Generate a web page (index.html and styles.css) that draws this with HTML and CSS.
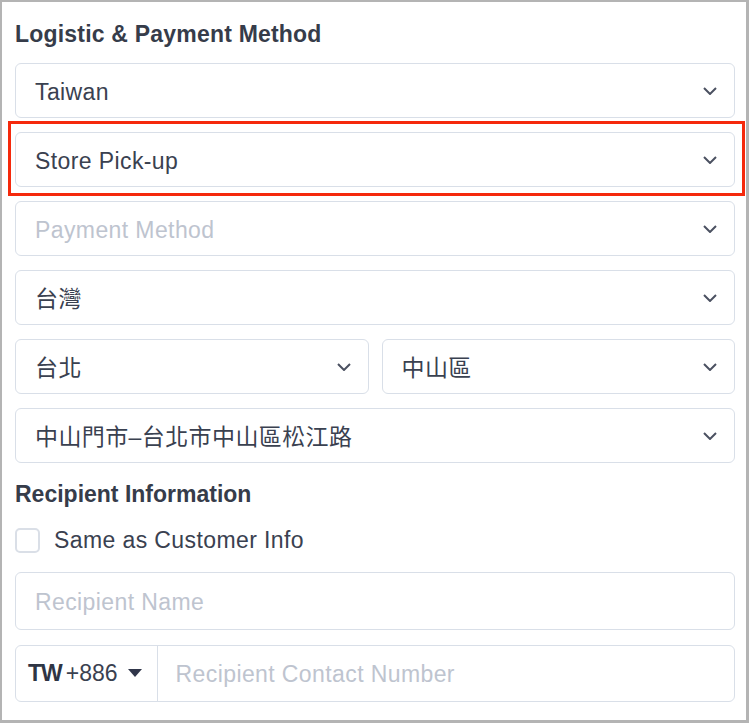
FILE: index.html
```html
<!DOCTYPE html>
<html lang="zh-Hant">
<head>
    <meta charset="UTF-8">
    <title>Logistic &amp; Payment Method</title>
    <meta name="viewport" content="width=device-width, initial-scale=1.0">
    <link rel="stylesheet" href="styles.css">
</head>
<body>
    <div class="frame">
        <h3 class="section-title">Logistic &amp; Payment Method</h3>

        <div class="field select">
            <span class="value">Taiwan</span>
            <svg class="chevron" width="14" height="8" viewBox="0 0 14 8"><path d="M1 1 L7 7 L13 1"/></svg>
        </div>

        <div class="highlight">
            <div class="field select">
                <span class="value">Store Pick-up</span>
                <svg class="chevron" width="14" height="8" viewBox="0 0 14 8"><path d="M1 1 L7 7 L13 1"/></svg>
            </div>
        </div>

        <div class="field select">
            <span class="value placeholder">Payment Method</span>
            <svg class="chevron" width="14" height="8" viewBox="0 0 14 8"><path d="M1 1 L7 7 L13 1"/></svg>
        </div>

        <div class="field select">
            <span class="value">台灣</span>
            <svg class="chevron" width="14" height="8" viewBox="0 0 14 8"><path d="M1 1 L7 7 L13 1"/></svg>
        </div>

        <div class="row">
            <div class="field select">
                <span class="value">台北</span>
                <svg class="chevron" width="14" height="8" viewBox="0 0 14 8"><path d="M1 1 L7 7 L13 1"/></svg>
            </div>
            <div class="field select">
                <span class="value">中山區</span>
                <svg class="chevron" width="14" height="8" viewBox="0 0 14 8"><path d="M1 1 L7 7 L13 1"/></svg>
            </div>
        </div>

        <div class="field select">
            <span class="value">中山門市–台北市中山區松江路</span>
            <svg class="chevron" width="14" height="8" viewBox="0 0 14 8"><path d="M1 1 L7 7 L13 1"/></svg>
        </div>

        <h3 class="section-title recipient">Recipient Information</h3>

        <label class="check-row">
            <span class="checkbox"></span>
            <span>Same as Customer Info</span>
        </label>

        <div class="field input">
            <span class="value placeholder">Recipient Name</span>
        </div>

        <div class="field input phone">
            <div class="prefix">
                <b>TW</b><span class="code">+886</span>
                <svg class="caret" width="14" height="8" viewBox="0 0 14 8"><path d="M0 0 H14 L7 8 Z"/></svg>
            </div>
            <span class="value placeholder">Recipient Contact Number</span>
        </div>
    </div>
</body>
</html>
```

FILE: styles.css
```css
html, body {
    margin: 0;
    padding: 0;
    background: #fff;
}
body {
    font-family: 'Liberation Sans', Arial, 'Noto Sans CJK TC', sans-serif;
    font-size: 23px;
    letter-spacing: 0.4px;
    color: #3a4150;
}
.frame {
    box-sizing: border-box;
    width: 749px;
    height: 723px;
    border-style: solid;
    border-color: #b4b4b4;
    border-width: 2px 3px 3px 2px;
    padding: 17px 11px 0 13px;
    overflow: hidden;
}
.section-title {
    margin: 0 0 14px;
    font-size: 23px;
    line-height: 30px;
    font-weight: bold;
    letter-spacing: 0.2px;
    color: #363c4a;
}
.section-title.recipient {
    margin: 16px 0 0;
    letter-spacing: 0;
}
.field {
    box-sizing: border-box;
    display: flex;
    align-items: center;
    border: 1px solid #d9dfe8;
    border-radius: 6px;
    background: #fff;
}
.select {
    height: 55px;
    padding: 0 17px 0 19px;
    margin-bottom: 14px;
}
.value {
    flex: 1;
    white-space: nowrap;
    line-height: 30px;
    padding-top: 2px;
}
.placeholder {
    color: #bec4cf;
}
.chevron {
    display: block;
    fill: none;
    stroke: #4b5161;
    stroke-width: 2;
}
.highlight {
    position: relative;
}
.highlight::after {
    content: "";
    position: absolute;
    left: -7px;
    top: -11px;
    right: -10px;
    bottom: -9px;
    border: 3px solid #f5290c;
    pointer-events: none;
}
.row {
    display: flex;
    gap: 13px;
}
.row .select {
    flex: 1;
}
.row + .select {
    margin-bottom: 0;
}
.check-row {
    display: flex;
    align-items: center;
    gap: 14px;
    margin-top: 19px;
    height: 25px;
    line-height: 25px;
}
.checkbox {
    box-sizing: border-box;
    width: 25px;
    height: 25px;
    border: 2px solid #dadfe7;
    border-radius: 5px;
}
.input {
    height: 57.5px;
    padding: 0 19px;
    margin-top: 19px;
}
.phone {
    height: 57px;
    margin-top: 15px;
    padding: 0;
}
.prefix {
    display: flex;
    align-items: center;
    height: 100%;
    padding: 0 15px 0 12px;
    border-right: 1px solid #d9dfe8;
    letter-spacing: 0;
}
.prefix b {
    font-weight: bold;
    color: #2f3544;
    letter-spacing: -1px;
}
.code {
    margin-left: 4px;
}
.caret {
    display: block;
    margin-left: 10px;
    fill: #30364a;
}
.phone .value {
    padding-left: 18px;
}
```
